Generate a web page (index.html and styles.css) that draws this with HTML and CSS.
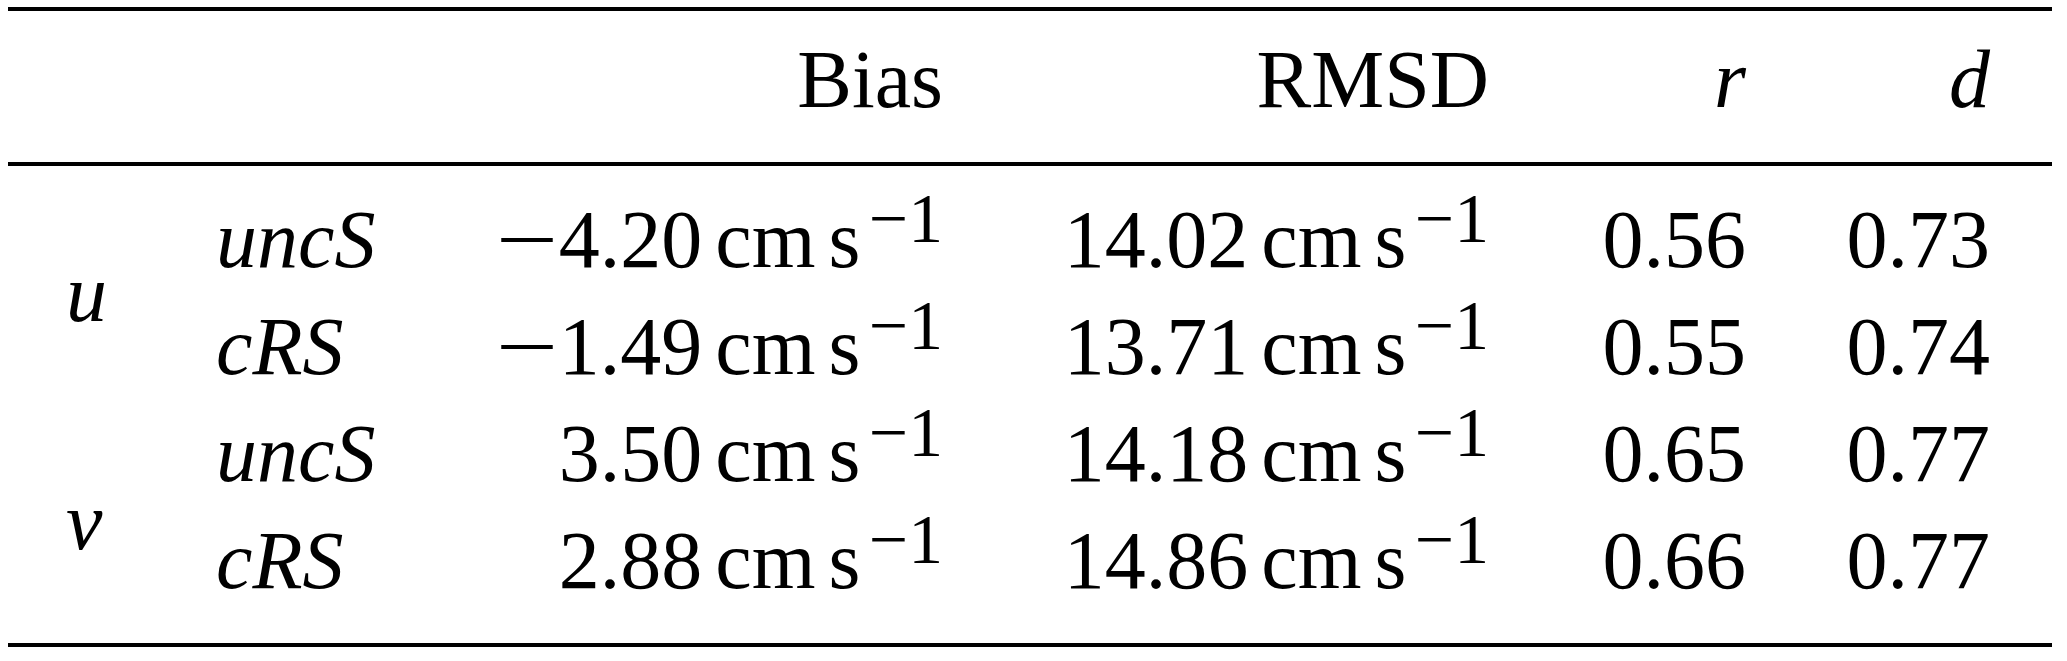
FILE: index.html
```html
<!DOCTYPE html>
<html lang="en">
<head>
<meta charset="utf-8">
<title>Table</title>
<link rel="stylesheet" href="styles.css">
</head>
<body>
<div class="page">
<table class="stats">
  <colgroup>
    <col class="c1"><col class="c2"><col class="c3"><col class="c4"><col class="c5"><col class="c6">
  </colgroup>
  <thead>
    <tr>
      <th class="lab"></th>
      <th class="meth"></th>
      <th class="num">Bias</th>
      <th class="num rm">RMSD</th>
      <th class="num c-r"><i>r</i></th>
      <th class="num c-d"><i>d</i></th>
    </tr>
  </thead>
  <tbody>
    <tr class="first">
      <td class="lab" rowspan="2"><i>u</i></td>
      <td class="meth"><i>uncS</i></td>
      <td class="num"><span class="neg">−</span>4.20<span class="unit">cm</span><span class="unit">s</span><sup>−1</sup></td>
      <td class="num rm">14.02<span class="unit">cm</span><span class="unit">s</span><sup>−1</sup></td>
      <td class="num c-r">0.56</td>
      <td class="num c-d">0.73</td>
    </tr>
    <tr>
      <td class="meth"><i>cRS</i></td>
      <td class="num"><span class="neg">−</span>1.49<span class="unit">cm</span><span class="unit">s</span><sup>−1</sup></td>
      <td class="num rm">13.71<span class="unit">cm</span><span class="unit">s</span><sup>−1</sup></td>
      <td class="num c-r">0.55</td>
      <td class="num c-d">0.74</td>
    </tr>
    <tr>
      <td class="lab" rowspan="2"><i>v</i></td>
      <td class="meth"><i>uncS</i></td>
      <td class="num">3.50<span class="unit">cm</span><span class="unit">s</span><sup>−1</sup></td>
      <td class="num rm">14.18<span class="unit">cm</span><span class="unit">s</span><sup>−1</sup></td>
      <td class="num c-r">0.65</td>
      <td class="num c-d">0.77</td>
    </tr>
    <tr class="last">
      <td class="meth"><i>cRS</i></td>
      <td class="num">2.88<span class="unit">cm</span><span class="unit">s</span><sup>−1</sup></td>
      <td class="num rm">14.86<span class="unit">cm</span><span class="unit">s</span><sup>−1</sup></td>
      <td class="num c-r">0.66</td>
      <td class="num c-d">0.77</td>
    </tr>
  </tbody>
</table>
</div>
</body>
</html>
```
FILE: styles.css
```css
html, body {
  margin: 0;
  padding: 0;
  background: #fff;
}

.page {
  padding: 7px 15px 0 8px;
}

.stats {
  width: 2044px;
  table-layout: fixed;
  border-collapse: collapse;
  font-family: "Liberation Serif", "Times New Roman", serif;
  font-size: 82px;
  line-height: 107px;
  color: #000;
  border-top: 4px solid #000;
  border-bottom: 4px solid #000;
}

.c1 { width: 192px; }
.c2 { width: 300px; }
.c3 { width: 490px; }
.c4 { width: 550px; }
.c5 { width: 250px; }
.c6 { width: 262px; }

.stats th,
.stats td {
  padding: 0;
  font-weight: normal;
  white-space: nowrap;
  vertical-align: baseline;
}

.stats thead tr {
  border-bottom: 4px solid #000;
}

.stats thead th {
  padding-top: 15px;
  padding-bottom: 29px;
}

.stats tbody tr.first td {
  padding-top: 20px;
}

.stats tbody tr.last td {
  padding-bottom: 29px;
}

.stats td.lab {
  vertical-align: middle;
  text-align: left;
  padding-left: 58px;
}

.stats .meth {
  text-align: left;
  padding-left: 16px;
}

.stats .num {
  text-align: right;
  padding-right: 47px;
}

.stats .num.rm { padding-right: 51px; }
.stats .num.c-r { padding-right: 44px; }
.stats .num.c-d { padding-right: 62px; }

.neg {
  display: inline-block;
  transform: scaleX(1.35);
  transform-origin: right center;
  margin-left: 0.1em;
}

.unit {
  margin-left: 0.16em;
}

sup {
  font-size: 0.85em;
  line-height: 0;
  vertical-align: 0.36em;
  margin-left: 0.12em;
}
```
